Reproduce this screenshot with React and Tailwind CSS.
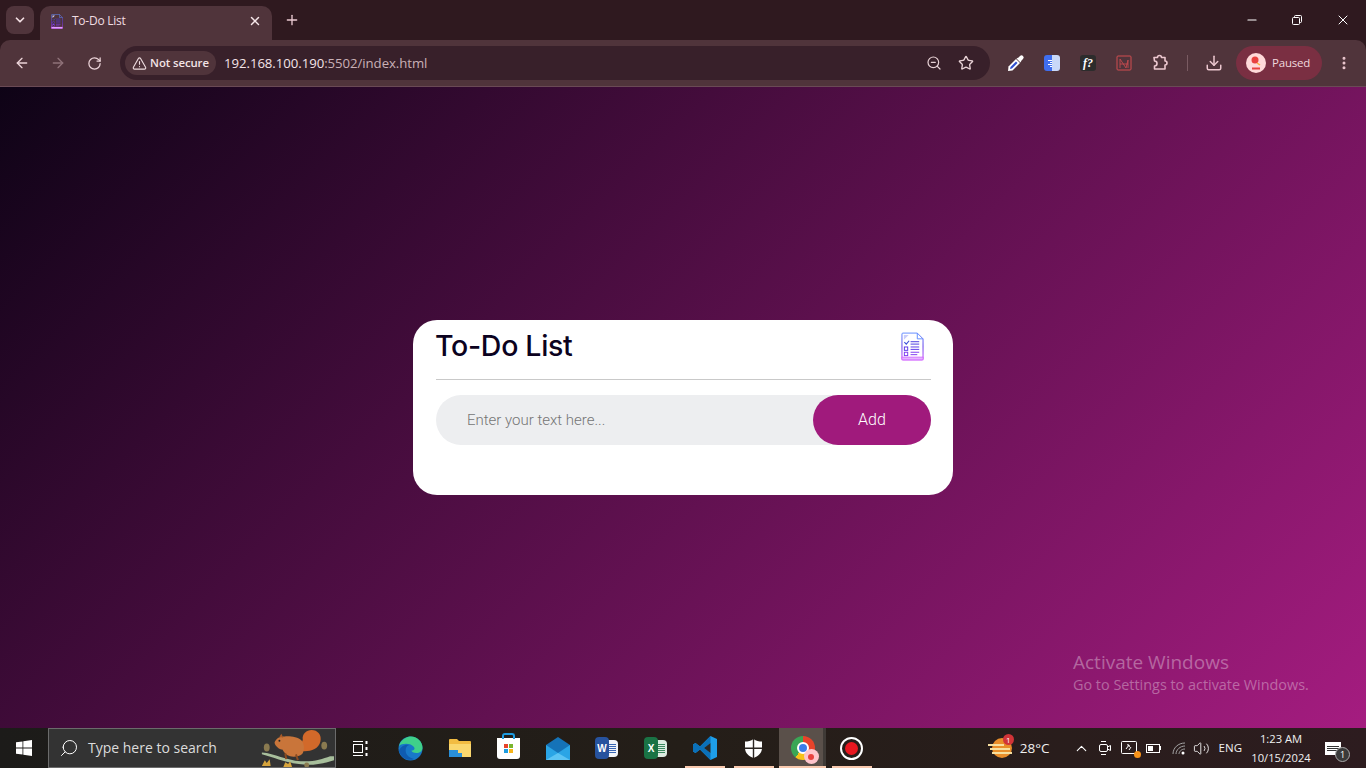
import { useState } from "react";
import { ArrowLeft, ArrowRight, RotateCw, ChevronDown, X, Plus, Minus, TriangleAlert, ZoomOut, Star, Download, EllipsisVertical, ChevronUp, Search, Volume2 } from "lucide-react";

const uiFont = "font-['Open_Sans',sans-serif]";

function DocIcon({ size = 24, h = 30 }) {
  return (
    <svg width={size} height={h} viewBox="0 0 24 30" fill="none">
      <defs>
        <linearGradient id="docGrad" x1="0" y1="0" x2="0" y2="1">
          <stop offset="0" stopColor="#5f8bff" />
          <stop offset="0.5" stopColor="#5a35e8" />
          <stop offset="1" stopColor="#c944ff" />
        </linearGradient>
      </defs>
      <path d="M2 1h15l6 6v21a1 1 0 0 1-1 1H2a1 1 0 0 1-1-1V2a1 1 0 0 1 1-1z" stroke="url(#docGrad)" strokeWidth="1" />
      <path d="M17 1v6h6" stroke="#5f8bff" strokeWidth="1" />
      <rect x="1" y="26" width="22" height="3" fill="#e4b6ff" stroke="#c944ff" strokeWidth="0.6" />
      <path d="M3 3h5L3 8z" fill="#c9cdfa" />
      <path d="M3.5 10.5l2 2 3-3.5" stroke="#3b4fd8" strokeWidth="1.2" />
      <path d="M10 10h9M10 12.5h9" stroke="#4a3ae0" strokeWidth="1" />
      <rect x="3.5" y="15.5" width="3.5" height="3.5" stroke="#5a35e8" strokeWidth="1" />
      <path d="M10 15.5h9M10 18h9" stroke="#5a35e8" strokeWidth="1" />
      <rect x="3.5" y="21" width="3.5" height="3.5" stroke="#7d3af0" strokeWidth="1" />
      <path d="M10 21h9M10 23.5h7" stroke="#7d3af0" strokeWidth="1" />
    </svg>
  );
}

function ChromeTop() {
  return (
    <div className={`${uiFont} shrink-0 bg-[#2f191f]`}>
      {/* tab strip */}
      <div className="flex h-10 items-end pl-1.5">
        <div className="mb-1.5 flex h-7 w-7 items-center justify-center rounded-lg bg-[#50343b]">
          <ChevronDown size={14} strokeWidth={3} className="text-[#f3dfe3]" />
        </div>
        <div className="ml-1.5 flex h-[34px] w-[232px] items-center rounded-t-[10px] bg-[#50343b] pb-1 pl-[11px] pr-2.5">
          <DocIcon size={12} h={15} />
          <span className="ml-[9px] flex-1 text-xs tracking-[-0.25px] text-[#f0dde1]">To-Do List</span>
          <X size={14} strokeWidth={2.5} className="text-[#f6e6e9]" />
        </div>
        <Plus size={16} strokeWidth={2} className="mb-[12px] ml-[12px] text-[#eccad2]" />
        <div className="flex-1" />
        <div className="mb-[12px] flex items-center text-white">
          <Minus size={14} strokeWidth={1.8} className="mr-[32px]" />
          <svg width="12" height="12" viewBox="0 0 12 12" fill="none" stroke="currentColor" className="mr-[32px]">
            <rect x="1.5" y="3.5" width="7" height="7" rx="1" />
            <path d="M3.5 3.5V2.5a1 1 0 0 1 1-1h5a1 1 0 0 1 1 1v5a1 1 0 0 1-1 1h-1" />
          </svg>
          <X size={16} strokeWidth={1.5} className="mr-[15px]" />
        </div>
      </div>
      {/* toolbar */}
      <div className="flex h-[47px] items-center rounded-t-[10px] border-b border-[#6a4a55] bg-[#50343b] pl-[14px] pr-2">
        <ArrowLeft size={16} strokeWidth={2} className="text-[#ecd4d9]" />
        <ArrowRight size={16} strokeWidth={2} className="ml-5 text-[#8f7279]" />
        <RotateCw size={15} strokeWidth={2} className="ml-[21px] text-[#ecd4d9]" />
        <div className="ml-[18px] flex h-[34px] w-[870px] items-center rounded-full bg-[#38202a] pl-[5px] pr-4">
          <div className="flex h-6 w-[91px] items-center justify-center rounded-full bg-[#50343b]">
            <TriangleAlert size={15} strokeWidth={1.8} className="text-[#efdde0]" />
            <span className="ml-[3px] text-[11.4px] font-semibold tracking-[-0.1px] text-[#f3e3e6]">Not secure</span>
          </div>
          <span className="ml-2 flex-1 pt-px text-[13.2px] tracking-[-0.05px] text-[#f5e4e8]">
            192.168.100.190<span className="text-[#c9b0b6]">:5502/index.html</span>
          </span>
          <ZoomOut size={16} strokeWidth={1.8} className="text-[#e8d2d6]" />
          <Star size={16} strokeWidth={2} className="ml-4 text-[#e8d2d6]" />
        </div>
        {/* extensions */}
        <svg width="18" height="18" viewBox="0 0 18 18" className="ml-[17px]">
          <path d="M1 17l.5-4.500L9 5l4 4-7.500 7.500z" fill="#fff" />
          <path d="M3 15l.5-2L9 7.500l1.500 1.500L5 14.500z" fill="#2f4fd0" />
          <path d="M9.500 4.500l2-1L13 2a2 2 0 0 1 3 3l-1.500 1.500-1 2z" fill="#fff" />
        </svg>
        <div className="ml-[19px] flex h-4 w-4 overflow-hidden rounded-[3px]">
          <div className="flex w-2 flex-col items-end justify-center gap-px bg-[#3f6ef0]">
            <div className="h-px w-1 bg-white" />
            <div className="h-px w-0.5 bg-white" />
            <div className="h-px w-1 bg-white" />
            <div className="h-px w-0.5 bg-white" />
          </div>
          <div className="w-2 bg-[#c9d8f8]" />
        </div>
        <div className="ml-5 flex h-4 w-4 items-center justify-center rounded-[3px] bg-[#2c2c2c] font-['Liberation_Serif',serif] text-[12px] font-bold italic leading-none text-white">
          f?
        </div>
        <svg width="16" height="16" viewBox="0 0 16 16" fill="none" stroke="#d14d50" className="ml-5">
          <rect x="1" y="1" width="14" height="14" rx="1" />
          <path d="M4 13V4l6 9M10 13l2-8v8M4 9h8" strokeWidth="0.8" />
        </svg>
        <svg width="18" height="18" viewBox="0 0 18 18" fill="none" stroke="#ecc7cf" strokeWidth="1.6" strokeLinejoin="round" className="ml-[19px]">
          <path d="M3 3.500h3.500a2 2 0 0 1 4 0H14v3.500a2 2 0 0 1 0 4V15H3.500v-3a2.500 2.500 0 0 0 0-5z" />
        </svg>
        <div className="ml-[18px] h-4 w-px bg-[#7a5b62]" />
        <Download size={18} strokeWidth={2} className="ml-[17px] text-[#ecc7cf]" />
        <div className="ml-[13px] flex h-[34px] w-[86px] items-center rounded-full bg-[#7a2f42] pl-2.5">
          <svg width="20" height="20" viewBox="0 0 20 20">
            <circle cx="10" cy="10" r="10" fill="#ffd9d9" />
            <circle cx="9" cy="7" r="3.500" fill="#e8413f" />
            <path d="M11 10l3 2" stroke="#f7b23a" strokeWidth="1.500" />
            <rect x="6" y="14.500" width="8" height="2" fill="#e8413f" />
          </svg>
          <span className="ml-1.5 text-[11.5px] tracking-[-0.2px] text-[#f0d9dd]">Paused</span>
        </div>
        <EllipsisVertical size={16} strokeWidth={2.5} className="ml-[14px] text-[#ecc7cf]" />
      </div>
    </div>
  );
}

function TodoCard() {
  const [text, setText] = useState("");
  return (
    <div className="h-[175px] w-[540px] rounded-[24px] bg-white pl-[23px] pr-[22px]">
      <div className="flex h-[60px] items-start justify-between border-b border-[#c9c9c9] pr-[7px]">
        <h2 className="-ml-px mt-[6px] font-['Inter',sans-serif] text-[28.5px] font-medium leading-[40px] tracking-[-0.3px] text-[#0b0220]">To-Do List</h2>
        <div className="mt-3"><DocIcon size={23} h={29} /></div>
      </div>
      <div className="mt-[15px] flex h-[50px] items-center rounded-full bg-[#edeef0]">
        <input
          value={text}
          onChange={(e) => setText(e.target.value)}
          placeholder="Enter your text here..."
          className="h-full flex-1 bg-transparent pl-[31px] font-['Roboto',sans-serif] text-[15px] font-light outline-none placeholder:text-[#757575]"
        />
        <button className="h-[50px] w-[118px] rounded-full bg-[#a01a7c] font-['Roboto',sans-serif] text-base font-light text-white">Add</button>
      </div>
    </div>
  );
}

function AppTile({ children, running }) {
  return (
    <div className="relative flex h-10 w-[49px] items-center justify-center">
      {children}
      {running && <div className="absolute bottom-0 left-[5px] right-1 h-0.5 bg-[#f9c9ae]" />}
    </div>
  );
}

// word and excel tiles share the same shape
function OfficeIcon({ letter, tile, sheet, line }) {
  return (
    <div className="relative flex h-[22px] w-[23px] items-center">
      <div className={`ml-[9px] flex h-[17px] w-[14px] flex-col justify-center gap-px rounded-r-sm px-0.5 ${sheet}`}>
        <div className={`h-px ${line}`} />
        <div className={`h-px ${line}`} />
        <div className={`h-px ${line}`} />
        <div className={`h-px ${line}`} />
        <div className={`h-px ${line}`} />
      </div>
      <div className={`absolute left-0 top-0 flex h-[22px] w-[14px] items-center justify-center rounded-sm font-['Liberation_Sans',sans-serif] text-[10px] font-bold text-white ${tile}`}>{letter}</div>
    </div>
  );
}

function Taskbar() {
  return (
    <div className={`flex h-10 shrink-0 items-center bg-gradient-to-r from-[#1c1b19] via-[#241e18] to-[#2d1c1f] ${uiFont}`}>
      <div className="flex w-12 justify-center">
        <svg width="16" height="16" viewBox="0 0 16 16" fill="#fff">
          <path d="M0 2.300l6.500-.9v6.200H0zM7.300 1.300L16 0v7.600H7.300zM0 8.400h6.500v6.200L0 13.700zM7.300 8.400H16V16l-8.700-1.200z" />
        </svg>
      </div>
      {/* search box */}
      <div className="relative flex h-10 w-[288px] items-center overflow-hidden border border-[#6b6b6b] bg-[#333333] pl-[10px]">
        <Search size={20} strokeWidth={1.2} className="-scale-x-100 text-white" />
        <span className="ml-[9px] text-sm text-[#dcdcdc]">Type here to search</span>
        <svg width="80" height="38" viewBox="0 0 80 39" className="absolute right-0 top-0">
          <path d="M6 24c14 1 24 8 40 9 12 1 22-2 30-5l4 0v4c-12 4-24 6-36 4C28 34 18 29 6 26z" fill="#a8bf9c" />
          <path d="M44 22c8 2 20 0 22-9 2-7-3-12-9-12-5 0-10 4-9 10z" fill="#d2692a" />
          <path d="M19 14c1-3 4-6 8-6 4-1 15-1 20 4 3 4 3 11 0 14-2 2-8 3-12 2-4-1-6-4-8-7-3 0-7-3-8-7z" fill="#c9753a" />
          <path d="M24 8l2-3 2 4z" fill="#a85a28" />
          <path d="M30 25l1 6M41 26l2 6" stroke="#8a4a20" strokeWidth="2" />
          <circle cx="24" cy="12" r="1" fill="#222" />
          <ellipse cx="11" cy="19" rx="3" ry="4" fill="#8a7a50" />
          <ellipse cx="70" cy="17" rx="3" ry="4" fill="#8a7a50" />
          <path d="M6 38l3-6 2 3 3-4 1 7z" fill="#d6a43c" />
          <path d="M28 39l2-5 3 2 2-3 2 6z" fill="#d6a43c" />
          <circle cx="52" cy="37" r="2.500" fill="#8a7a50" />
        </svg>
      </div>
      <AppTile>
        <svg width="17" height="17" viewBox="0 0 17 17" fill="none" stroke="#fff">
          <path d="M1 1.500h10M1 15.500h10" />
          <rect x="1.500" y="4.500" width="9" height="8" />
          <path d="M14.500 1v3M14.500 7v3M14.500 13v3" strokeWidth="2" />
        </svg>
      </AppTile>
      <div className="ml-px">
        <AppTile>
          <svg width="25" height="25" viewBox="0 0 25 25">
            <circle cx="12.500" cy="12.500" r="12" fill="#1878c8" />
            <path d="M1 10C3 3 9 .5 13 .5c7 0 11.500 6 11.500 11 0 4-3 5.500-6 5.500-3 0-5-1-5-2.500 3 0 4-2 2-4-4-4-12-3-14.500-.5z" fill="#3fd08a" />
            <path d="M11 9c-3 1-4 4-3 8 1 3 4 5 8 6-4 2-12 1-15-8 1-4 6-7 10-6z" fill="#0f5bb0" />
          </svg>
        </AppTile>
      </div>
      <AppTile>
        <svg width="22" height="20" viewBox="0 0 22 20">
          <path d="M0 2a1 1 0 0 1 1-1h7l2 2h11a1 1 0 0 1 1 1v15H0z" fill="#f2bc42" />
          <path d="M0 6h22v13H0z" fill="#fad76e" />
          <path d="M0 12h9v3h4v4H0z" fill="#2a8fd8" />
        </svg>
      </AppTile>
      <AppTile>
        <div className="relative flex h-[21px] w-[23px] items-center justify-center rounded-b-[3px] bg-white">
          <div className="absolute -top-[5px] left-[5px] h-[6px] w-[13px] rounded-t-[3px] border-2 border-b-0 border-[#1e9ce0]" />
          <div className="grid grid-cols-2 gap-px">
            <div className="h-1 w-1 bg-[#e8432a]" />
            <div className="h-1 w-1 bg-[#79b52e]" />
            <div className="h-1 w-1 bg-[#1e9ce0]" />
            <div className="h-1 w-1 bg-[#f7b51a]" />
          </div>
        </div>
      </AppTile>
      <AppTile>
        <svg width="24" height="23" viewBox="0 0 24 23">
          <path d="M0 8L12 0l12 8v15H0z" fill="#1573b8" />
          <path d="M0 8l12 8 12-8v15H0z" fill="#2aa5e6" />
          <path d="M0 23l12-7 12 7z" fill="#5cc4f4" />
        </svg>
      </AppTile>
      <AppTile>
        <OfficeIcon letter="W" tile="bg-[#27539e]" sheet="bg-[#f2f5fa]" line="bg-[#3b68b5]" />
      </AppTile>
      <AppTile>
        <OfficeIcon letter="X" tile="bg-[#1a7345]" sheet="bg-[#dcebe1]" line="bg-[#3b8a60]" />
      </AppTile>
      <AppTile running>
        <svg width="24" height="24" viewBox="0 0 24 24">
          <path d="M17.500 0L24 3v18l-6.500 3L7 13.500l-4.500 3.500L0 15.500v-7L2.500 7 7 10.500z" fill="#1e9ee8" />
          <path d="M17.500 0v7L11 12l6.500 5v7L7 13.500l-4.500 3.500L0 15.500v-7L2.500 7 7 10.500z" fill="#0b70b8" />
          <path d="M17.500 7L11 12l6.500 5z" fill="#2b2622" />
        </svg>
      </AppTile>
      <AppTile running>
        <svg width="17" height="19" viewBox="0 0 17 19">
          <path d="M8.500 0C11 2 14 2.500 17 2.500V9c0 5-4 8.500-8.500 10C4 17.500 0 14 0 9V2.500C3 2.500 6 2 8.500 0z" fill="#fff" />
          <path d="M7.800 0h1.400v19H7.800zM0 8.500h17v1.400H0z" fill="#2b2622" />
        </svg>
      </AppTile>
      {/* active chrome tile, narrower with a strip on its right edge */}
      <div className="relative ml-px flex h-10 w-[47px] items-center justify-center border-r-[3px] border-[#3f3a36] bg-[#5a504a] pl-[3px]">
        <div className="relative h-6 w-6 rounded-full bg-[conic-gradient(#e8432a_0deg_120deg,#f7c21a_120deg_220deg,#3aa655_220deg_360deg)]">
          <div className="absolute left-[6px] top-[6px] h-3 w-3 rounded-full border-2 border-white bg-[#3b7de8]" />
          <div className="absolute -bottom-1 -right-1 flex h-[15px] w-[15px] items-center justify-center rounded-full bg-[#ffc4cb]">
            <div className="h-1.5 w-1.5 rounded-full bg-[#e8413f]" />
          </div>
        </div>
        <div className="absolute bottom-0 left-0 right-[-3px] h-0.5 bg-[#f9c9ae]" />
      </div>
      <div className="ml-px">
        <AppTile running>
          <div className="flex h-[23px] w-[23px] items-center justify-center rounded-full border-2 border-white">
            <div className="h-[13px] w-[13px] rounded-full bg-[#e8171f]" />
          </div>
        </AppTile>
      </div>
      <div className="flex-1" />
      {/* weather + tray */}
      <div className="relative mr-[8px] flex h-6 w-6 items-center justify-center">
        <div className="ml-1 h-5 w-5 rounded-full bg-[#e98e2a]" />
        <div className="absolute left-0 top-[8px] h-0.5 w-4 bg-[#f7df9e]" />
        <div className="absolute left-0.5 top-[12px] h-0.5 w-5 bg-[#f7df9e]" />
        <div className="absolute left-1 top-[16px] h-0.5 w-5 bg-[#f7df9e]" />
        <div className="absolute -top-0.5 right-[-2px] flex h-[11px] w-[11px] items-center justify-center rounded-full bg-[#d13438] text-[8px] leading-none text-white">1</div>
      </div>
      <span className="text-[13.5px] text-[#f0f0f0]">28°C</span>
      <ChevronUp size={17} strokeWidth={1.5} className="ml-[23px] text-white" />
      <svg width="14" height="18" viewBox="0 0 14 18" fill="none" stroke="#fff" className="ml-[8px]">
        <rect x="1.500" y="5.500" width="8" height="7" rx="1.500" />
        <path d="M9.500 8l3-1.500v5l-3-1.500M3 2.500h5M3 15.500h5" />
      </svg>
      <div className="relative ml-[9px]">
        <svg width="16" height="16" viewBox="0 0 16 16" fill="none" stroke="#fff">
          <rect x="0.500" y="1.500" width="15" height="12" rx="1" />
          <path d="M5 9l3-4M8 5l-2-.2M8 5l.3 2M10 7L8 10" />
        </svg>
        <div className="absolute -bottom-0.5 -right-1 h-[7px] w-[7px] rounded-full bg-[#f7931a]" />
      </div>
      <div className="ml-[9px] flex items-center">
        <div className="flex h-[9px] w-[14px] items-center border border-white px-px">
          <div className="h-[5px] w-[5px] bg-white" />
        </div>
        <div className="h-1 w-px bg-white" />
      </div>
      <svg width="14" height="13" viewBox="0 0 14 13" fill="none" stroke="#a5a5a5" className="ml-[11px]">
        <path d="M1 12C1 6 6 1 13 1M4 12c0-4 4-8 9-8M7 12c0-2 2-5 6-5" />
        <circle cx="11" cy="11" r="1.500" fill="#fff" stroke="none" />
      </svg>
      <Volume2 size={17} strokeWidth={1.2} className="ml-[7px] text-white" />
      <span className="ml-[9px] text-[11.5px] text-[#f0f0f0]">ENG</span>
      <div className="ml-[8px] flex w-[62px] flex-col items-center text-[11.2px] leading-[19px] text-[#f0f0f0]">
        <span>1:23 AM</span>
        <span>10/15/2024</span>
      </div>
      <div className="relative ml-[13px] mr-[25px]">
        <div className="flex h-[13px] w-[16px] flex-col justify-center gap-px bg-white px-0.5">
          <div className="h-px bg-[#333]" />
          <div className="h-px bg-[#333]" />
          <div className="h-px bg-[#333]" />
        </div>
        <div className="absolute -bottom-[7px] -right-[9px] flex h-[15px] w-[15px] items-center justify-center rounded-full border border-[#aaa] bg-[#3a3a3a] text-[9px] leading-none text-white">1</div>
      </div>
    </div>
  );
}

export default function App() {
  return (
    <div className="flex h-screen flex-col overflow-hidden">
      <ChromeTop />
      <div className="relative flex flex-1 items-center justify-center bg-[linear-gradient(135deg,#0e0316,#a51c80)]">
        <TodoCard />
        {/* windows watermark sits over the page */}
        <div className={`absolute left-[1073px] top-[563px] ${uiFont} text-white/35`}>
          <div className="text-[19px] leading-6">Activate Windows</div>
          <div className="text-[14.4px] leading-[22px]">Go to Settings to activate Windows.</div>
        </div>
      </div>
      <Taskbar />
    </div>
  );
}
